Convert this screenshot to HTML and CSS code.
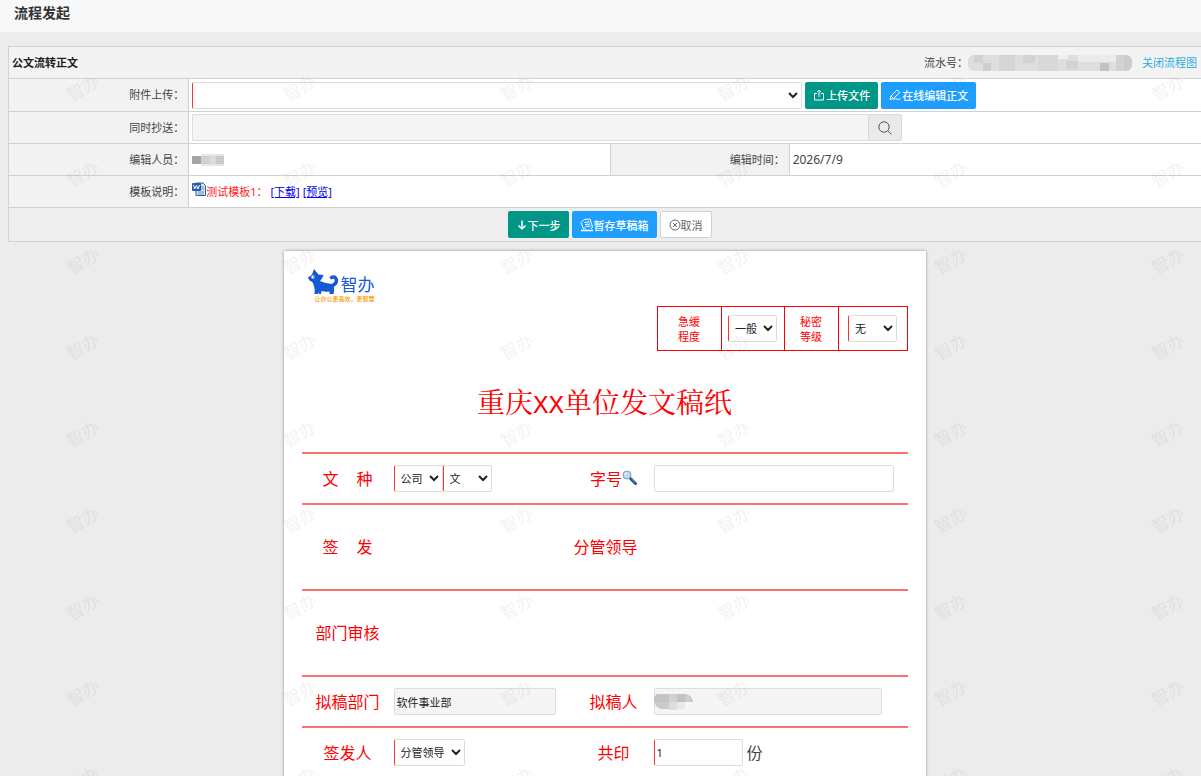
FILE: index.html
```html
<!DOCTYPE html>
<html lang="zh-CN">
<head>
  <meta charset="UTF-8">
  <meta name="viewport" content="width=device-width, initial-scale=1.0">
  <title>流程发起</title>
  <link rel="stylesheet" href="styles.css">
</head>
<body>

  <header class="page-header">
    <h1>流程发起</h1>
  </header>

  <main>
    <!-- 流程信息 -->
    <section class="flow-form">
      <div class="form-title">
        <h2>公文流转正文</h2>
        <div class="serial">
          <span>流水号：</span>
          <svg class="mask" width="164" height="16" viewBox="0 0 164 16" aria-hidden="true">
            <defs><clipPath id="serial-clip"><rect width="164" height="16" rx="6"/></clipPath></defs>
            <g clip-path="url(#serial-clip)">
              <rect width="164" height="16" fill="#dedede"/>
              <rect x="6" width="9" height="8" fill="#d2d2d2"/>
              <rect x="15" y="8" width="8" height="8" fill="#cdcdcd"/>
              <rect x="31" y="0" width="16" height="16" fill="#d6d6d6"/>
              <rect x="55" y="0" width="12" height="8" fill="#d3d3d3"/>
              <rect x="70" y="0" width="20" height="16" fill="#d8d8d8"/>
              <rect x="90" y="0" width="10" height="4" fill="#f0f0f0"/>
              <rect x="98" y="6" width="12" height="8" fill="#d2d2d2"/>
              <rect x="110" y="0" width="38" height="7" fill="#ebebeb"/>
              <rect x="132" y="8" width="9" height="8" fill="#c2c2c2"/>
              <rect x="148" y="0" width="8" height="16" fill="#d2d2d2"/>
              <rect x="156" y="0" width="8" height="16" fill="#cccccc"/>
            </g>
          </svg>
          <a href="#">关闭流程图</a>
        </div>
      </div>

      <div class="form-row upload">
        <label class="cell-label" for="attachment">附件上传：</label>
        <div class="cell wide">
          <select id="attachment" class="required attachment"><option></option></select>
          <button type="button" class="btn green">
            <svg width="13" height="12" viewBox="0 0 13 12"><path d="M4 4.500H1.500V11h9V4.500H8M6 8V1M4 3l2-2 2 2"/></svg>上传文件
          </button>
          <button type="button" class="btn blue">
            <svg width="13" height="12" viewBox="0 0 13 12"><path d="M1 10.500l1-3.500 5.500-5.500q1.500-1 2.500 1t-.8 2.500L4.500 9.500zM2 7l2.500 2.500M4.500 10.800q2-2 3.500-.8t3.500-.3"/></svg>在线编辑正文
          </button>
        </div>
      </div>

      <div class="form-row">
        <label class="cell-label" for="copy-to">同时抄送：</label>
        <div class="cell wide copy">
          <input type="text" id="copy-to" readonly>
          <button type="button" class="search-btn" aria-label="选择抄送人">
            <svg width="14" height="14" viewBox="0 0 14 14"><circle cx="6" cy="6" r="5.200"/><path d="M9.800 9.800L13.500 13.300"/></svg>
          </button>
        </div>
      </div>

      <div class="form-row">
        <span class="cell-label">编辑人员：</span>
        <div class="cell">
          <svg class="mask" width="33" height="16" viewBox="0 0 33 16" aria-hidden="true">
            <rect x="9" y="2" width="23" height="12" fill="#e6e6e6"/>
            <rect y="4" width="9" height="8" fill="#a5a5a5"/>
            <rect x="9" y="4" width="8" height="8" fill="#cfcfcf"/>
            <rect x="17" y="4" width="7" height="8" fill="#dadada"/>
            <rect x="24" y="4" width="8" height="8" fill="#c9c9c9"/>
          </svg>
        </div>
        <span class="cell-label bordered">编辑时间：</span>
        <div class="cell date">2026/7/9</div>
      </div>

      <div class="form-row">
        <span class="cell-label">模板说明：</span>
        <div class="cell wide template">
          <svg width="14" height="14" viewBox="0 0 14 14" aria-hidden="true">
            <path d="M4 1h7l2.500 2.500V13.500H4z" fill="#cfe2f7" stroke="#2f5f9e"/>
            <path d="M9 5h3M9 7h3M6 10h6M6 12h6" stroke="#6f9bd0"/>
            <rect x="0" y="1" width="9" height="8" rx="1" fill="#2c5da8"/>
            <path d="M1.500 3l1.200 4L4.500 3.500 6 7l1.500-4" fill="none" stroke="#fff"/>
          </svg>
          <span class="template-name">测试模板1：</span>
          <a href="#">[下载]</a>
          <a href="#">[预览]</a>
        </div>
      </div>

      <div class="form-actions">
        <button type="button" class="btn green">
          <svg width="12" height="12" viewBox="0 0 12 12"><path class="bold" d="M6 1.500V10M2.500 6.500L6 10l3.500-3.500"/></svg>下一步
        </button>
        <button type="button" class="btn blue">
          <svg width="14" height="14" viewBox="0 0 14 14"><path d="M3.500 11L1 4.500 4 1.500l6-.5 2.500 8-1.500 2M4.500 4.500l5-.8M5 6.500l5-.5M5.500 8.500l5-.5M3.500 11q1-2 2.500 0"/><path class="bold" d="M1 12.500h12"/></svg>暂存草稿箱
        </button>
        <button type="button" class="btn plain">
          <svg width="12" height="12" viewBox="0 0 12 12"><circle cx="6" cy="6" r="5"/><path d="M4 4l4 4M8 4L4 8"/></svg>取消
        </button>
      </div>
    </section>

    <!-- 发文稿纸 -->
    <section class="paper">
      <div class="logo">
        <svg width="34" height="28" viewBox="0 0 34 28" aria-hidden="true">
          <path d="M7 1l4.500 5.500 5 .5-1.500 3.500-2 2.500q5 2 9 2.500 4 .5 5 4 .5 3-.5 6.500h-4v-2.500q-5 .5-8-.5l-.5 3h-2L12 24l-1 2H7.500q1-5-1-9.500-.5-2-2-3-2.500-.5-3.500-4l4-3z" fill="#155ad2"/>
          <path d="M24 18q5.500-1.500 5.500-6-1.500-4.500-5-2.500" fill="none" stroke="#155ad2" stroke-width="3.500" stroke-linecap="round"/>
          <circle cx="6" cy="9" r="1.700" fill="#fff"/><circle cx="6.700" cy="9" r=".8" fill="#155ad2"/>
        </svg>
        <span class="logo-name">智办</span>
        <span class="slogan">让办公更高效，更智慧</span>
      </div>

      <div class="levels">
        <label for="urgency">急缓<br>程度</label>
        <div><select id="urgency" class="required short"><option>一般</option></select></div>
        <label for="secrecy">秘密<br>等级</label>
        <div><select id="secrecy" class="required short"><option>无</option></select></div>
      </div>

      <h2 class="paper-title">重庆<span>XX</span>单位发文稿纸</h2>

      <div class="paper-row">
        <label class="spaced" for="doc-type"><span>文</span><span>种</span></label>
        <div class="field">
          <select id="doc-type" class="required short"><option>公司</option></select><select class="required short" aria-label="文种类别"><option>文</option></select>
        </div>
        <label for="doc-no">字号<svg width="15" height="15" viewBox="0 0 15 15" aria-hidden="true">
          <path d="M8.500 8.500l5 5" stroke="#234f86" stroke-width="3" stroke-linecap="round"/>
          <path d="M9.500 8.800l4 4" stroke="#6ca2dc"/>
          <circle cx="5" cy="5" r="4" fill="#b9d9fb" stroke="#8b98a8"/>
          <path d="M3 5q0-2 2-2" stroke="#fff" fill="none"/>
        </svg></label>
        <div class="field"><input type="text" id="doc-no" class="doc-no"></div>
      </div>

      <div class="paper-row tall leader">
        <span class="spaced"><span>签</span><span>发</span></span>
        <div class="field"></div>
        <span>分管领导</span>
      </div>

      <div class="paper-row tall">
        <span>部门审核</span>
      </div>

      <div class="paper-row">
        <label for="dept">拟稿部门</label>
        <div class="field"><input type="text" id="dept" class="dept" value="软件事业部" readonly></div>
        <label for="drafter">拟稿人</label>
        <div class="field">
          <input type="text" id="drafter" class="drafter" readonly>
          <svg class="drafter-mask" width="39" height="16" viewBox="0 0 39 16" aria-hidden="true">
            <path d="M3 0h28q7 1 8 8H0V3z" fill="#c3c3c3"/>
            <rect x="15" width="8" height="8" fill="#cdd2d4"/>
            <rect x="31" y="2" width="6" height="6" fill="#c9ced3"/>
            <path d="M0 8h16v7H6Q2 13 0 8z" fill="#cccaca"/>
            <rect x="15" y="8" width="8" height="8" fill="#dcdfdf"/>
            <rect x="23" y="8" width="8" height="7" fill="#e8eaea"/>
          </svg>
        </div>
      </div>

      <div class="paper-row">
        <label for="signer">签发人</label>
        <div class="field"><select id="signer" class="required signer"><option>分管领导</option></select></div>
        <label for="copies">共印</label>
        <div class="field"><input type="text" id="copies" class="required copies" value="1"><span class="unit">份</span></div>
      </div>
    </section>
  </main>

  <!-- 水印 -->
  <svg class="watermark" aria-hidden="true">
    <defs>
      <pattern id="mark" width="217" height="173" patternUnits="userSpaceOnUse">
        <text x="83" y="49" transform="rotate(-30 83 43)">智办</text>
        <text x="83" y="135" transform="rotate(-30 83 129)">智办</text>
      </pattern>
    </defs>
    <rect width="100%" height="100%" fill="url(#mark)"/>
  </svg>

</body>
</html>
```

FILE: styles.css
```css
* {
  box-sizing: border-box;
}

body {
  display: flex;
  flex-direction: column;
  height: 100vh;
  margin: 0;
  overflow: hidden;
  background-color: #ececec;
  color: #444;
  font-family: "Noto Sans", "Noto Sans CJK SC", sans-serif;
  font-size: 11px;
  line-height: 16px;
}

h1, h2 {
  margin: 0;
}

.page-header {
  flex: none;
  height: 32px;
  padding: 3px 14px;
  background-color: #f8f8f8;
}

.page-header h1 {
  color: #333;
  font-size: 14px;
  line-height: 20px;
}

main {
  flex: 1;
  display: flex;
  flex-direction: column;
  min-height: 0;
  padding: 14px 0 0 8px;
}

svg {
  flex: none;
}

/* form controls */
input, select {
  height: 27px;
  margin: 0;
  padding: 0 2px;
  border: 1px solid #ddd;
  border-radius: 2px;
  background-color: #fff;
  color: #222;
  font-family: inherit;
  font-size: 11px;
}

input[readonly] {
  background-color: #f5f5f5;
}

input.required, select.required {
  border-left-color: #f33;
}

.btn {
  display: inline-flex;
  align-items: center;
  justify-content: center;
  height: 27px;
  padding: 0 7px;
  border: 1px solid transparent;
  border-radius: 2px;
  color: #fff;
  font-family: inherit;
  font-size: 11px;
  font-weight: 500;
  white-space: nowrap;
  cursor: pointer;
}

.btn svg, .search-btn svg {
  fill: none;
  stroke: currentColor;
}

.btn .bold {
  stroke-width: 1.5;
}

.btn.green {
  background-color: #009688;
}

.btn.blue {
  background-color: #1e9fff;
}

.btn.plain {
  padding: 0 8px;
  border-color: #d2d2d2;
  background-color: #fff;
  color: #666;
  font-weight: 400;
}

/* top form, runs off the right side */
.flow-form {
  flex: none;
  margin-right: -10px;
  border: 1px solid #d2d2d2;
}

.form-title {
  display: flex;
  align-items: center;
  justify-content: space-between;
  height: 31px;
  padding: 0 13px 0 3px;
  background-color: #f3f3f3;
}

.form-title h2 {
  color: #222;
  font-size: 11px;
}

.serial {
  display: flex;
  align-items: center;
}

.serial a {
  margin-left: 10px;
  color: #29abe2;
  text-decoration: none;
}

.form-row {
  display: grid;
  grid-template-columns: 15fr 35fr 15fr 35fr;
  height: 32px;
  border-top: 1px solid #d2d2d2;
  background-color: #fff;
}

.form-row.upload {
  height: 33px;
}

.cell-label {
  display: flex;
  align-items: center;
  justify-content: flex-end;
  padding-right: 4px;
  border-right: 1px solid #d2d2d2;
  background-color: #f2f2f2;
}

.cell-label.bordered {
  border-left: 1px solid #d2d2d2;
}

.cell {
  display: flex;
  align-items: center;
  gap: 3px;
  padding: 0 3px;
}

.cell.wide {
  grid-column: span 3;
}

.cell.date {
  font-size: 12px;
}

.attachment {
  width: 610px;
}

.cell.copy {
  gap: 0;
}

.copy input {
  width: 676px;
  border-right: none;
  border-radius: 2px 0 0 2px;
}

.search-btn {
  display: flex;
  align-items: center;
  justify-content: center;
  width: 34px;
  height: 27px;
  border: 1px solid #d8d8d8;
  border-radius: 0 2px 2px 0;
  background-color: #eaeaea;
  color: #555;
}

.template svg {
  align-self: flex-start;
  margin-top: 6px;
}

.template-name {
  margin-left: -3px;
  color: #f22;
}

.template a {
  color: #00e;
}

.form-actions {
  display: flex;
  align-items: center;
  justify-content: center;
  gap: 3px;
  height: 34px;
  border-top: 1px solid #d2d2d2;
  background-color: #eee;
}

/* paper */
.paper {
  flex: 1;
  align-self: center;
  width: 642px;
  margin-top: 9px;
  padding: 17px 18px 0;
  background-color: #fff;
  box-shadow: 0 0 3px rgba(0, 0, 0, 0.4);
  color: #f00;
}

.logo {
  display: grid;
  grid-template-columns: 34px auto;
  grid-template-rows: 27px 8px;
  justify-content: start;
  height: 38px;
  padding-left: 5px;
}

.logo-name {
  padding-top: 8px;
  color: #155ad2;
  font-size: 17px;
  line-height: 18px;
}

.slogan {
  grid-column: span 2;
  padding-left: 8px;
  color: #f90;
  font-size: 6px;
  font-weight: 500;
  line-height: 8px;
  white-space: nowrap;
}

.levels {
  display: grid;
  grid-template-columns: 63px 63px 54px 69px;
  width: 251px;
  height: 45px;
  margin-left: auto;
  border: 1px solid #f00;
  line-height: 15px;
}

.levels > * {
  display: flex;
  align-items: center;
  justify-content: center;
  text-align: center;
}

.levels > * + * {
  border-left: 1px solid #f00;
}

.short {
  width: 49px;
}

.paper-title {
  margin: 29px 0 25px;
  font-family: "Noto Serif CJK SC", "Noto Sans CJK SC", serif;
  font-size: 28px;
  font-weight: 400;
  line-height: 42px;
  text-align: center;
}

.paper-title span {
  font-family: "Liberation Mono", monospace;
  font-size: 26px;
}

.paper-row {
  display: grid;
  grid-template-columns: 92px 180px 80px 1fr;
  align-items: center;
  height: 51px;
  border-top: 2px solid #ff7070;
  font-size: 16px;
  text-align: center;
}

.paper-row.tall {
  height: 86px;
}

.paper-row.leader {
  grid-template-columns: 92px 180px 64px;
}

.spaced {
  display: flex;
  justify-content: center;
  gap: 18px;
}

.field {
  display: flex;
  align-items: center;
  position: relative;
}

.doc-no {
  width: 240px;
}

.dept {
  width: 162px;
}

.drafter {
  width: 228px;
}

.drafter-mask {
  position: absolute;
  left: 0;
  top: 6px;
}

.signer {
  width: 71px;
}

.copies {
  width: 89px;
}

.unit {
  margin-left: 4px;
  color: #444;
}

.watermark {
  position: fixed;
  top: 45px;
  left: 0;
  width: 100%;
  height: calc(100% - 45px);
  pointer-events: none;
}

.watermark text {
  fill: rgba(0, 0, 0, 0.05);
  font-family: "Noto Sans CJK SC", sans-serif;
  font-size: 17px;
  text-anchor: middle;
}
```
